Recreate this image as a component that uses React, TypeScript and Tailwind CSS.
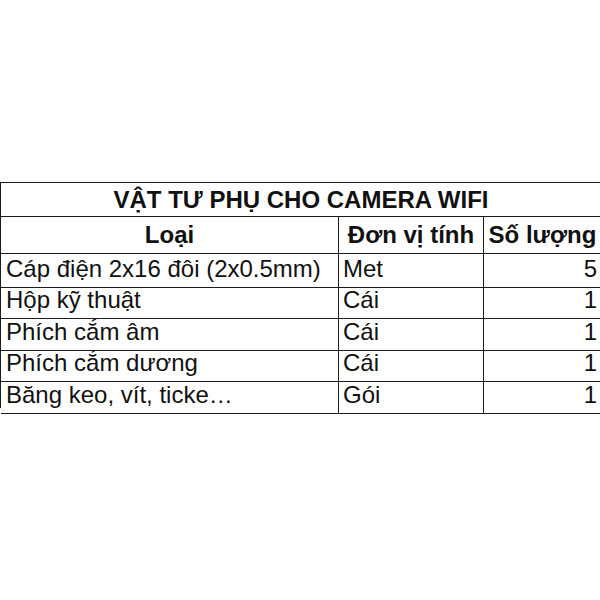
const rows = [
  { name: "Cáp điện 2x16 đôi (2x0.5mm)", unit: "Met", qty: 5, h: "h-[31px]" },
  { name: "Hộp kỹ thuật", unit: "Cái", qty: 1, h: "h-[32px]" },
  { name: "Phích cắm âm", unit: "Cái", qty: 1, h: "h-[31px]" },
  { name: "Phích cắm dương", unit: "Cái", qty: 1, h: "h-[32px]" },
  { name: "Băng keo, vít, ticke…", unit: "Gói", qty: 1, h: "h-[31px]" },
]

export default function App() {
  return (
    <div className="w-[600px] h-[600px] overflow-hidden bg-white pt-[182px] text-[#111] font-['Liberation_Sans',Arial,sans-serif] text-[24px]">
      <div className="w-[602px] border-t border-l border-[#1c1c1c]">
        <div className="h-[34px] flex items-center justify-center border-b border-r border-[#1c1c1c] font-bold">
          VẬT TƯ PHỤ CHO CAMERA WIFI
        </div>
        <div className="grid grid-cols-[338px_145px_118px] h-[34px] font-bold">
          <div className="flex items-center justify-center border-b border-r border-[#1c1c1c]">Loại</div>
          <div className="flex items-center justify-center border-b border-r border-[#1c1c1c]">Đơn vị tính</div>
          <div className="flex items-center justify-center border-b border-r border-[#1c1c1c]">Số lượng</div>
        </div>
        {rows.map((r) => (
          <div key={r.name} className={`grid grid-cols-[338px_145px_118px] ${r.h}`}>
            <div className="flex items-center pl-[5px] border-b border-r border-[#1c1c1c] whitespace-nowrap">{r.name}</div>
            <div className="flex items-center pl-[4px] border-b border-r border-[#1c1c1c]">{r.unit}</div>
            <div className="flex items-center justify-end pr-[4px] border-b border-r border-[#1c1c1c]">{r.qty}</div>
          </div>
        ))}
      </div>
    </div>
  )
}
